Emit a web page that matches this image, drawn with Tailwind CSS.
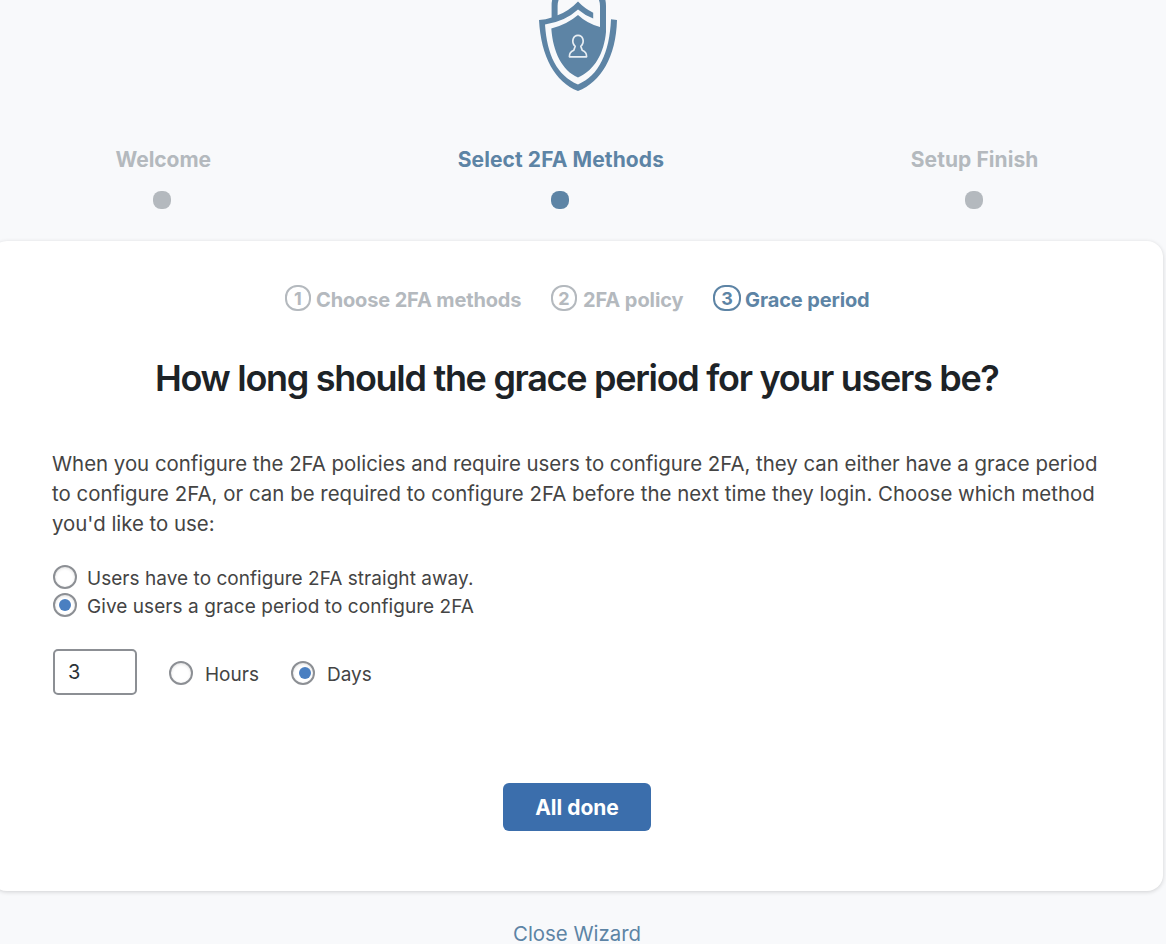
<!DOCTYPE html>
<html lang="en">
<head>
<meta charset="utf-8">
<title>Setup wizard</title>
<script src="https://cdn.jsdelivr.net/npm/@tailwindcss/browser@4"></script>
</head>
<body class="h-[944px] overflow-hidden bg-[#f8f9fb] font-['Inter',sans-serif] text-[#444444] whitespace-nowrap">
<header>
  <div class="flex h-[91px] justify-center pr-[10px]">
    <svg width="78" height="91" viewBox="0 0 78 91">
      <g fill="#5d84a5">
        <path d="M0 20Q7 19.500 12.600 17.500V5Q12.600 1 14 -3H21Q18.600 1 18.600 6V15.300Q30 11 39 1.500Q45.500 8.500 54.200 12.700V18.500Q46 15.500 39 9.500Q26 21.500 6 24.500C8 55 18 75.500 39 84.500C60 75.500 70.500 53 72 19.300L78 20C77 57 62 82 39 91C16 82 2 57 0 20Z"/>
        <path d="M12.300 28.500Q28 24.500 39 15Q48 23.500 61 27V6Q61 1 58.500 -3H65.500Q67 1 67 6V32C65 53 56 70 39 77.500C23 70.500 14 52 12.300 28.500Z"/>
      </g>
      <path d="M36.200 46.300C31.800 42 34 35.300 39 35.300C44 35.300 46.200 42 41.800 46.300L43.200 50.300C46 51.500 47.800 54 47.600 56.800H30.400C30.200 54 32 51.500 34.800 50.300Z" fill="none" stroke="#e8eef3" stroke-width="1.700" stroke-linejoin="round"/>
    </svg>
  </div>
  <ol class="mt-[54px] flex h-[96px] justify-between pl-[115.500px] pr-[127.500px] text-[21px] leading-[30px] font-bold text-[#b4b9be]">
    <li class="flex flex-col items-center"><span class="tracking-[-0.06px]">Welcome</span><i class="mt-4 mr-0.5 size-[18px] rounded-[8px] bg-[#b4b9be]"></i></li>
    <li class="flex flex-col items-center text-[#5d84a5]"><span class="tracking-[0.1px]">Select 2FA Methods</span><i class="mt-4 mr-px size-[18px] rounded-[8px] bg-[#5d84a5]"></i></li>
    <li class="flex flex-col items-center"><span class="tracking-[0.07px]">Setup Finish</span><i class="mt-4 mr-px size-[18px] rounded-[8px] bg-[#b4b9be]"></i></li>
  </ol>
</header>
<main class="-ml-[9px] h-[650px] w-[1172px] rounded-2xl bg-white pl-[62px] shadow-[0_1px_4px_rgba(0,0,0,0.16)]">
  <ol class="ml-[232px] flex h-[117px] items-start pt-[44px] text-[20px] leading-[26px] font-bold text-[#b4b9be]">
    <li class="flex w-[266px]"><b class="h-[26px] w-[26px] rounded-[12px] border-2 border-[#b4b9be] text-center text-[18px] leading-[23px] font-bold">1</b><span class="ml-[5px] mt-[2px] tracking-[-0.14px]">Choose 2FA methods</span></li>
    <li class="flex w-[162px]"><b class="h-[26px] w-[26px] rounded-[12px] border-2 border-[#b4b9be] text-center text-[18px] leading-[23px] font-bold">2</b><span class="ml-[6px] mt-[2px] tracking-[-0.08px]">2FA policy</span></li>
    <li class="flex text-[#5d84a5]"><b class="h-[26px] w-[28px] rounded-[12px] border-2 border-[#5d84a5] text-center text-[18px] leading-[23px] font-bold">3</b><span class="ml-[4px] mt-[2px] tracking-[-0.12px]">Grace period</span></li>
  </ol>
  <h1 class="ml-[102px] text-[36px] leading-[40px] font-semibold tracking-[-1.3px] text-[#1d2327]">How long should the grace period for your users be?</h1>
  <p class="-ml-px mt-[51px] text-[20.400px] leading-[30px]"><span>When you configure the 2FA policies and require users to configure 2FA, they can either have a grace period</span><br><span class="tracking-[0.03px]">to configure 2FA, or can be required to configure 2FA before the next time they login. Choose which method</span><br><span>you'd like to use:</span></p>
  <div class="mt-[25px] text-[19px] leading-[28px]">
    <div class="flex h-7 items-start"><i class="mt-px size-6 rounded-full border-2 border-[#8c8f94] shadow-[inset_0_1px_3px_rgba(0,0,0,0.12)]"></i><span class="mt-px ml-[10px] tracking-[0.04px]">Users have to configure 2FA straight away.</span></div>
    <div class="flex h-7 items-start"><i class="mt-px flex size-6 items-center justify-center rounded-full border-2 border-[#8c8f94] shadow-[inset_0_1px_3px_rgba(0,0,0,0.12)]"><b class="size-3 rounded-full bg-[#4a7fc1]"></b></i><span class="mt-px ml-[10px] tracking-[0.06px]">Give users a grace period to configure 2FA</span></div>
  </div>
  <div class="mt-[29px] flex h-[46px] text-[19px] leading-[28px]">
    <div class="h-[46px] w-[84px] rounded-[5px] border-2 border-[#8c8f94] pl-[13px] text-[20px] leading-[42px] text-[#2c3338]">3</div>
    <i class="mt-3 ml-8 size-6 rounded-full border-2 border-[#8c8f94] shadow-[inset_0_1px_3px_rgba(0,0,0,0.12)]"></i><span class="mt-3 ml-3 w-[86px]">Hours</span>
    <i class="mt-3 flex size-6 items-center justify-end rounded-full border-2 border-[#8c8f94] pr-[2px] shadow-[inset_0_1px_3px_rgba(0,0,0,0.12)]"><b class="size-3 rounded-full bg-[#4a7fc1]"></b></i><span class="mt-3 ml-3">Days</span>
  </div>
  <div class="mt-[88px] ml-[450px] h-12 w-[148px] rounded-[6px] bg-[#3b6eac] text-center text-[21px] leading-[49px] font-bold text-white">All done</div>
</main>
<footer class="mt-[28px] pl-[513px] text-[20.400px] leading-[30px] text-[#5d84a5]">Close Wizard</footer>
</body>
</html>
